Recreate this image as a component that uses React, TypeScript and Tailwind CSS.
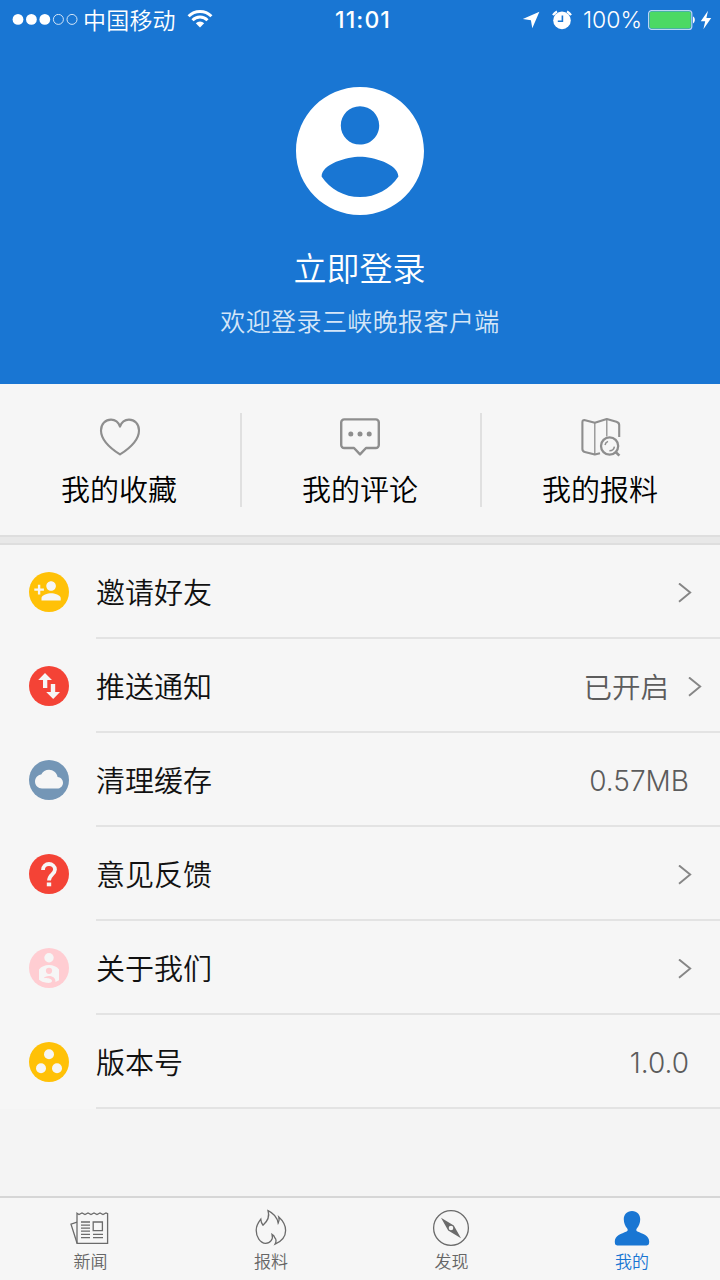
import React from 'react'

// Status bar
const StatusBar: React.FC = () => (
  <div className="flex h-10 w-full items-center text-white">
    <div className="flex flex-1 items-center pl-[12px]">
      <svg width="66" height="12" viewBox="0 0 66 12" fill="none">
        <circle cx="6" cy="5.4" r="5.4" fill="currentColor" />
        <circle cx="19.4" cy="5.4" r="5.4" fill="currentColor" />
        <circle cx="32.8" cy="5.4" r="5.4" fill="currentColor" />
        <circle cx="46.4" cy="5.4" r="5" stroke="currentColor" strokeWidth="0.8" />
        <circle cx="60" cy="5.4" r="5" stroke="currentColor" strokeWidth="0.8" />
      </svg>
      <span className="ml-[5px] pt-[2px] text-[23px] leading-[38px] font-[350] tracking-[0.2px]">中国移动</span>
      <svg className="mb-[2px] ml-[11px]" width="26" height="18" viewBox="0 0 26 18" fill="none" stroke="currentColor" strokeWidth="3">
        <path d="M1.6 6.2a16.2 16.2 0 0 1 22.8 0" />
        <path d="M5.5 10.2a10.6 10.6 0 0 1 15 0" />
        <path d="M13 17.6l-4.2-4.3a6 6 0 0 1 8.4 0z" fill="currentColor" stroke="none" />
      </svg>
    </div>
    <span className="mr-[-2px] text-[23px] font-medium tracking-[1.1px]">11:01</span>
    <div className="flex flex-1 items-center justify-end pr-[8px]">
      <svg width="18" height="18" viewBox="0 0 18 18" fill="currentColor">
        <path d="M17.4 .8L10.3 17.2l-1.4-8L.8 8z" />
      </svg>
      <svg className="ml-[12px]" width="20" height="20" viewBox="0 0 20 20" fill="none">
        <circle cx="10" cy="10.4" r="8.8" fill="#fff" />
        <path d="M1 5.2A12 12 0 0 1 5 1.5M19 5.2A12 12 0 0 0 15 1.5" stroke="#fff" strokeWidth="2.2" />
        <path d="M10.4 5.4v5.8H5.8" stroke="#1976d3" strokeWidth="1.6" />
      </svg>
      <span className="ml-[11px] text-[23px] font-[350]">100%</span>
      <svg className="ml-[6px]" width="48" height="20" viewBox="0 0 48 20">
        <rect x="0.6" y="0.6" width="43.2" height="18.8" rx="3" fill="none" stroke="#b9d5f5" strokeWidth="1.2" />
        <rect x="1.6" y="1.6" width="41.2" height="16.8" rx="1.8" fill="#4cd964" />
        <path d="M45 6.6c2.4 1 2.4 5.8 0 6.8z" fill="#fff" />
      </svg>
      <svg className="ml-[4px]" width="12" height="20" viewBox="0 0 12 20" fill="currentColor">
        <path d="M8 .8L.8 11.2h4.4L3.4 19.2 11.2 8H6.4z" />
      </svg>
    </div>
  </div>
)

// Shortcut icons
const HeartIcon = () => (
  <svg className="shrink-0" width="42" height="40" viewBox="0 0 42 40" fill="none" stroke="#8e8e8e" strokeWidth="2.1" strokeLinejoin="round">
    <path d="M21 37.4C13.5 32.6 2 23.6 2 13.4 2 7 6.6 2.6 12 2.6c4 0 7.4 2.4 9 7 1.6-4.6 5-7 9-7 5.4 0 10 4.4 10 10.8 0 10.2-11.5 19.2-19 24z" />
  </svg>
)

const CommentIcon = () => (
  <svg className="shrink-0" width="42" height="40" viewBox="0 0 42 40" fill="none" stroke="#8e8e8e" strokeWidth="2.4" strokeLinejoin="round">
    <path d="M5.2 2.4h31.6a3 3 0 0 1 3 3v22.6a3 3 0 0 1-3 3H27L21 37.4 15 31H5.2a3 3 0 0 1-3-3V5.4a3 3 0 0 1 3-3z" />
    <g fill="#8e8e8e" stroke="none">
      <circle cx="11.8" cy="17" r="2.5" />
      <circle cx="21" cy="17" r="2.5" />
      <circle cx="30.2" cy="17" r="2.5" />
    </g>
  </svg>
)

const MapSearchIcon = () => (
  <svg className="ml-[1px] shrink-0" width="42" height="40" viewBox="0 0 42 40" fill="none" stroke="#8e8e8e" strokeWidth="2.1" strokeLinejoin="round">
    <path d="M20 36.2l-5.2 1.3-10-2.6q-2.4-.6-2.4-3V5.2q0-2.6 2.8-2l9.6 2.5L26.8 2l9.6 2.7q2.800.8 2.800 3.400v12" />
    <path d="M14.8 6v31M26.8 2.5v17" strokeWidth="1.3" />
    <circle cx="29.6" cy="29" r="8.6" strokeWidth="2.3" />
    <path d="M35.6 35l3.8 3.6" strokeWidth="2.6" />
    <path d="M25 28a5 5 0 0 1 3-3.6M34.4 29.6a5 5 0 0 1-5 4.2" strokeWidth="1.5" />
  </svg>
)

// Round row icons
const InviteIcon = () => (
  <svg width="40" height="40" viewBox="0 0 40 40">
    <circle cx="20" cy="20" r="20" fill="#ffc107" />
    <path
      transform="translate(4.1 4.4) scale(1.2)"
      fill="#f6f6f6"
      d="M15 12c2.21 0 4-1.79 4-4s-1.79-4-4-4-4 1.79-4 4 1.79 4 4 4zm-9-2V7H4v3H1v2h3v3h2v-3h3v-2H6zm9 4c-2.67 0-8 1.34-8 4v2h16v-2c0-2.66-5.33-4-8-4z"
    />
  </svg>
)

const PushIcon = () => (
  <svg width="40" height="40" viewBox="0 0 40 40">
    <circle cx="20" cy="20" r="20" fill="#f44336" />
    <path fill="#f6f6f6" d="M16 7l7 7h-4.7v8H14v-8H9.2zM24.2 33l-7-7h4.6v-8h4.4v8H31z" />
  </svg>
)

const CacheIcon = () => (
  <svg width="40" height="40" viewBox="0 0 40 40">
    <circle cx="20" cy="20" r="20" fill="#7496b6" />
    <path
      transform="translate(6 5.2) scale(1.167)"
      fill="#f6f6f6"
      d="M19.35 10.04C18.67 6.59 15.64 4 12 4 9.11 4 6.6 5.64 5.35 8.04 2.34 8.36 0 10.91 0 14c0 3.31 2.69 6 6 6h13c2.76 0 5-2.24 5-5 0-2.64-2.05-4.78-4.65-4.96z"
    />
  </svg>
)

const FeedbackIcon = () => (
  <svg width="40" height="40" viewBox="0 0 40 40">
    <circle cx="20" cy="20" r="20" fill="#f44336" />
    <g fill="none" stroke="#f6f6f6" strokeWidth="3.8">
      <path d="M14 16c0-3.6 2.8-6 6-6s6 2.400 6 5.600c0 4.600-6 5.200-6 11" />
      <path d="M17.800 30.400h4.400" />
    </g>
  </svg>
)

const AboutIcon = () => (
  <svg width="40" height="40" viewBox="0 0 40 40">
    <circle cx="20" cy="20" r="20" fill="#ffcdd2" />
    <circle cx="20" cy="9.8" r="4.7" fill="#f6f6f6" />
    <path fill="#f6f6f6" d="M10 21.6c2-3 6-4.6 10-4.6s8 1.600 10 4.600v10.600L26.400 34c.6-4-3-6.200-6.600-6-2.400.1-4.400 1-5 2.200 2.400-.5 7.600 0 8.200 2.600.3 2-3 2.400-5.600 2-3-.4-5.400-1.400-7.400-3z" />
    <circle cx="20" cy="22.8" r="3.1" fill="#ffcdd2" />
  </svg>
)

const VersionIcon = () => (
  <svg width="40" height="40" viewBox="0 0 40 40">
    <circle cx="20" cy="20" r="20" fill="#ffc107" />
    <g fill="#f6f6f6">
      <circle cx="20" cy="12.2" r="5" />
      <circle cx="12" cy="26.2" r="5" />
      <circle cx="28" cy="26.2" r="5" />
    </g>
  </svg>
)

const Chevron = () => (
  <svg width="14" height="20" viewBox="0 0 14 20" fill="none" stroke="#868686" strokeWidth="1.9">
    <path d="M1 .4L12.2 9.600 1 18.800" />
  </svg>
)

// Tab bar icons
const NewsIcon = () => (
  <svg className="mr-[3px]" width="40" height="38" viewBox="0 0 40 38" fill="none" stroke="#6b6b6b" strokeWidth="1.3">
    <path d="M8 4.2l2 1.4 3-1.6 3 1.6 3-1.6 3 1.6 3-1.6 3 1.6 3-1.6 3 1.6 3-1.6 1.600.6v29.700H8z" />
    <path d="M8 13.2l-6 2L8 34" />
    <path d="M12 13h9M12 16.2h9M12 19.2h9M12 22.2h9M12 25.3h9M12 28.6h9M24 25.3h10M24 28.6h10" />
    <path d="M24.2 13h9.200v8.600h-9.200z" />
  </svg>
)

const FlameIcon = () => (
  <svg className="mr-[1px]" width="40" height="38" viewBox="0 0 40 38" fill="none" stroke="#6b6b6b" strokeWidth="1.3">
    <path d="M17 1.6c4.8 2.2 9.2 6.8 10.2 12.6 1.2-1.8 1.3-3.6.6-6.2 4.4 4 6.8 8.6 6.8 13.4 0 6.4-4.4 11-10.6 13.8 1.4-2.6 1.2-5-.2-6.4-.5-1.7-1.2-2.6-2.8-3.400 1.600 4.800-1.800 9-6.400 9-5.600-.6-9.400-6.600-9.400-13.200 0-4 2-7.600 4.600-11 .2 2.600.8 4.400 2.200 6C16.600 12.200 19 7.800 17 1.600z" />
  </svg>
)

const CompassIcon = () => (
  <svg className="mr-[1px]" width="40" height="38" viewBox="0 0 40 38" fill="none" stroke="#6b6b6b" strokeWidth="1.3">
    <circle cx="20" cy="19" r="17.4" />
    <path fill="#6b6b6b" stroke="none" fillRule="evenodd" d="M10 8.800l12.800 7.600L30 29.200 17.200 21.600zM20 16.700a2.300 2.300 0 1 0 0 4.600 2.300 2.300 0 0 0 0-4.600z" />
  </svg>
)

const PersonIcon = () => (
  <svg width="40" height="38" viewBox="0 0 40 38" fill="#1976d3">
    <path d="M20 2c5.2 0 8.4 3.6 8.2 8.6-.1 3.6-1.2 6.4-3.4 8.800-.8 1-.6 2.400.6 3 5.200 2.200 11.800 4 11.800 10.200 0 3.200-1 4-3.400 4H6.200c-2.400 0-3.400-.8-3.400-4 0-6.200 6.600-8 11.800-10.200 1.200-.6 1.400-2 .6-3-2.200-2.400-3.300-5.200-3.400-8.800C11.600 5.600 14.800 2 20 2z" />
  </svg>
)

const shortcuts = [
  { label: '我的收藏', icon: <HeartIcon /> },
  { label: '我的评论', icon: <CommentIcon /> },
  { label: '我的报料', icon: <MapSearchIcon /> },
]

const rows = [
  { label: '邀请好友', icon: <InviteIcon />, arrow: true },
  { label: '推送通知', icon: <PushIcon />, value: '已开启', arrow: true },
  { label: '清理缓存', icon: <CacheIcon />, value: '0.57MB' },
  { label: '意见反馈', icon: <FeedbackIcon />, arrow: true },
  { label: '关于我们', icon: <AboutIcon />, arrow: true },
  { label: '版本号', icon: <VersionIcon />, value: '1.0.0' },
]

const tabs = [
  { label: '新闻', icon: <NewsIcon />, className: 'pl-[1px] text-[#666]' },
  { label: '报料', icon: <FlameIcon />, className: 'pl-[2px] text-[#666]' },
  { label: '发现', icon: <CompassIcon />, className: 'pl-[3px] text-[#666]' },
  { label: '我的', icon: <PersonIcon />, className: 'pl-[4px] text-[#1976d3]' },
]

const App: React.FC = () => {
  return (
    <div className="flex h-[1280px] w-[720px] flex-col overflow-hidden bg-[#f4f4f4] font-['Inter','Noto_Sans_CJK_SC',sans-serif]">
      {/* Profile header */}
      <header className="flex h-[384px] shrink-0 flex-col items-center bg-[#1976d3] text-white">
        <StatusBar />
        <svg className="mt-[47px] shrink-0" width="128" height="128" viewBox="2 2 20 20" fill="#fff">
          <path d="M12 2C6.48 2 2 6.48 2 12s4.48 10 10 10 10-4.48 10-10S17.52 2 12 2zm0 3c1.66 0 3 1.34 3 3s-1.34 3-3 3-3-1.34-3-3 1.34-3 3-3zm0 14.2c-2.5 0-4.71-1.28-6-3.22.03-1.99 4-3.08 6-3.08 1.99 0 5.97 1.09 6 3.08-1.29 1.94-3.5 3.22-6 3.22z" />
        </svg>
        <h1 className="mt-[30px] pr-[1px] text-[33px] leading-[48px] font-[350]">立即登录</h1>
        <p className="mt-[11px] text-[25px] leading-[36px] font-[350] tracking-[0.4px] text-[#d5e6f8]">欢迎登录三峡晚报客户端</p>
      </header>

      {/* Shortcuts */}
      <section className="flex h-[151px] shrink-0 bg-[#f6f6f6] pt-[29px]">
        {shortcuts.map((item, index) => (
          <div
            key={item.label}
            className={`flex h-[94px] w-60 flex-col items-center pt-[4px] ${index > 0 ? 'border-l-2 border-[#e0e0e0] pr-[2px]' : ''}`}
          >
            {item.icon}
            <span className={`mt-[12px] text-[29px] leading-[44px] font-[350] text-black ${index === 0 ? 'pr-[2px]' : ''}`}>{item.label}</span>
          </div>
        ))}
      </section>
      <div className="h-[10px] shrink-0 border-y-2 border-[#dedede] bg-[#e8e8e8]" />

      {/* Settings list */}
      <ul className="shrink-0 bg-[#f6f6f6]">
        {rows.map((row) => (
          <li key={row.label} className="flex h-[94px] items-center pl-[29px]">
            {row.icon}
            <div className={`ml-[27px] flex h-full flex-1 items-center border-b-2 border-[#e3e3e3] pt-[4px] ${row.value && row.arrow ? 'pr-[18px]' : row.arrow ? 'pr-[28px]' : 'pr-[31px]'}`}>
              <span className="flex-1 pt-[2px] text-[29px] leading-[44px] font-[350] text-[#111]">{row.label}</span>
              {row.value && (
                <span className={`leading-[44px] font-[350] text-[#5c5c5c] ${row.arrow ? 'pt-[2px] text-[28.5px]' : 'text-[28px]'}`}>
                  {row.value}
                </span>
              )}
              {row.arrow && <span className={row.value ? 'ml-[19px]' : ''}><Chevron /></span>}
            </div>
          </li>
        ))}
      </ul>

      {/* Tab bar */}
      <nav className="mt-auto flex h-[84px] shrink-0 border-t-2 border-[#d6d6d6] bg-[#f6f6f6]">
        {tabs.map((tab) => (
          <div key={tab.label} className={`flex w-[180px] flex-col items-center pt-[11px] ${tab.className}`}>
            {tab.icon}
            <span className="mt-[3px] text-[17px] leading-[24px] font-[350]">{tab.label}</span>
          </div>
        ))}
      </nav>
    </div>
  )
}

export default App
